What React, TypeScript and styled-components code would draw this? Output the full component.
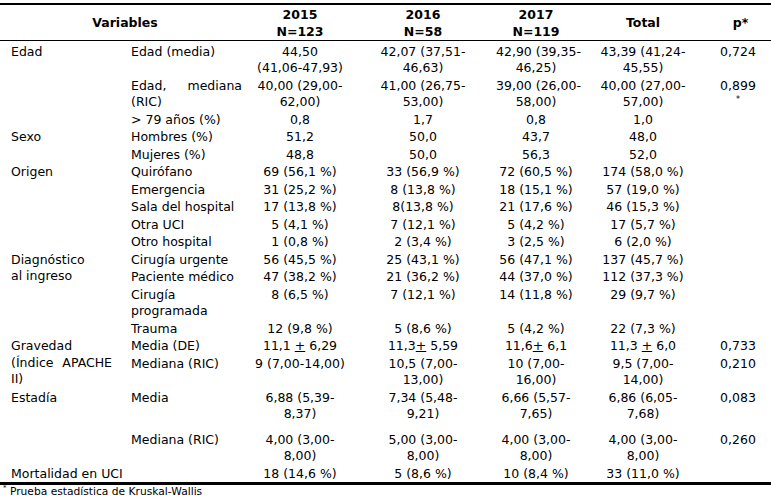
import React from "react";
import styled, { createGlobalStyle } from "styled-components";

const GlobalStyle = createGlobalStyle`
  body {
    margin: 0;
    background: #fff;
    color: #000;
    font-family: "DejaVu Sans", Verdana, sans-serif;
  }
`;

// one line of text per "\n", "+_" becomes an underlined plus (±)
const renderText = (s: string) =>
  s.split("\n").map((line, i) => (
    <React.Fragment key={i}>
      {i > 0 && <br />}
      {line.split("+_").map((part, j) => (
        <React.Fragment key={j}>
          {j > 0 && <Under>+</Under>}
          {part}
        </React.Fragment>
      ))}
    </React.Fragment>
  ));

const Vals = ({ vals }: { vals: string[] }) => (
  <>
    {vals.map((v, i) => (
      <DataCell key={i}>{renderText(v)}</DataCell>
    ))}
  </>
);

const App = () => {
  return (
    <Page>
      <GlobalStyle />
      <Table>
        <colgroup>
          <col style={{ width: 125 }} />
          <col style={{ width: 125 }} />
          <col style={{ width: 100 }} />
          <col style={{ width: 146 }} />
          <col style={{ width: 80 }} />
          <col style={{ width: 134 }} />
          <col style={{ width: 61 }} />
        </colgroup>
        <thead>
          <tr>
            <HeadCell colSpan={2}>Variables</HeadCell>
            <HeadCell>
              2015
              <br />
              N=123
            </HeadCell>
            <HeadCell>
              2016
              <br />
              N=58
            </HeadCell>
            <HeadCell>
              2017
              <br />
              N=119
            </HeadCell>
            <HeadCell>Total</HeadCell>
            <HeadCell>p*</HeadCell>
          </tr>
        </thead>
        <tbody>
          <tr>
            <GroupCell rowSpan={3}>Edad</GroupCell>
            <LabelCell>Edad (media)</LabelCell>
            <Vals
              vals={[
                "44,50\n(41,06-47,93)",
                "42,07 (37,51-\n46,63)",
                "42,90 (39,35-\n46,25)",
                "43,39 (41,24-\n45,55)",
              ]}
            />
            <PCell>0,724</PCell>
          </tr>
          <tr>
            <LabelCell>
              <Justified>Edad, mediana</Justified>
              (RIC)
            </LabelCell>
            <Vals
              vals={[
                "40,00 (29,00-\n62,00)",
                "41,00 (26,75-\n53,00)",
                "39,00 (26,00-\n58,00)",
                "40,00 (27,00-\n57,00)",
              ]}
            />
            <PCell>
              0,899
              <br />
              <Star>*</Star>
            </PCell>
          </tr>
          <tr>
            <LabelCell>&gt; 79 años (%)</LabelCell>
            <Vals vals={["0,8", "1,7", "0,8", "1,0"]} />
            <PCell />
          </tr>

          <tr>
            <GroupCell rowSpan={2}>Sexo</GroupCell>
            <LabelCell>Hombres (%)</LabelCell>
            <Vals vals={["51,2", "50,0", "43,7", "48,0"]} />
            <PCell />
          </tr>
          <tr>
            <LabelCell>Mujeres (%)</LabelCell>
            <Vals vals={["48,8", "50,0", "56,3", "52,0"]} />
            <PCell />
          </tr>

          <tr>
            <GroupCell rowSpan={5}>Origen</GroupCell>
            <LabelCell>Quirófano</LabelCell>
            <Vals
              vals={["69 (56,1 %)", "33 (56,9 %)", "72 (60,5 %)", "174 (58,0 %)"]}
            />
            <PCell />
          </tr>
          <tr>
            <LabelCell>Emergencia</LabelCell>
            <Vals
              vals={["31 (25,2 %)", "8 (13,8 %)", "18 (15,1 %)", "57 (19,0 %)"]}
            />
            <PCell />
          </tr>
          <tr>
            <LabelCell>Sala del hospital</LabelCell>
            <Vals
              vals={["17 (13,8 %)", "8(13,8 %)", "21 (17,6 %)", "46 (15,3 %)"]}
            />
            <PCell />
          </tr>
          <tr>
            <LabelCell>Otra UCI</LabelCell>
            <Vals vals={["5 (4,1 %)", "7 (12,1 %)", "5 (4,2 %)", "17 (5,7 %)"]} />
            <PCell />
          </tr>
          <tr>
            <LabelCell>Otro hospital</LabelCell>
            <Vals vals={["1 (0,8 %)", "2 (3,4 %)", "3 (2,5 %)", "6 (2,0 %)"]} />
            <PCell />
          </tr>

          <tr>
            <GroupCell rowSpan={4}>
              Diagnóstico
              <br />
              al ingreso
            </GroupCell>
            <LabelCell>Cirugía urgente</LabelCell>
            <Vals
              vals={["56 (45,5 %)", "25 (43,1 %)", "56 (47,1 %)", "137 (45,7 %)"]}
            />
            <PCell />
          </tr>
          <tr>
            <LabelCell>Paciente médico</LabelCell>
            <Vals
              vals={["47 (38,2 %)", "21 (36,2 %)", "44 (37,0 %)", "112 (37,3 %)"]}
            />
            <PCell />
          </tr>
          <tr>
            <LabelCell>
              Cirugía
              <br />
              programada
            </LabelCell>
            <Vals
              vals={["8 (6,5 %)", "7 (12,1 %)", "14 (11,8 %)", "29 (9,7 %)"]}
            />
            <PCell />
          </tr>
          <tr>
            <LabelCell>Trauma</LabelCell>
            <Vals vals={["12 (9,8 %)", "5 (8,6 %)", "5 (4,2 %)", "22 (7,3 %)"]} />
            <PCell />
          </tr>

          <tr>
            <GroupCell rowSpan={2}>
              Gravedad
              <Justified>(Índice APACHE</Justified>
              II)
            </GroupCell>
            <LabelCell>Media (DE)</LabelCell>
            <Vals
              vals={["11,1 +_ 6,29", "11,3+_ 5,59", "11,6+_ 6,1", "11,3 +_ 6,0"]}
            />
            <PCell>0,733</PCell>
          </tr>
          <tr>
            <LabelCell>Mediana (RIC)</LabelCell>
            <Vals
              vals={[
                "9 (7,00-14,00)",
                "10,5 (7,00-\n13,00)",
                "10 (7,00-\n16,00)",
                "9,5 (7,00-\n14,00)",
              ]}
            />
            <PCell>0,210</PCell>
          </tr>

          <GapRow>
            <GroupCell rowSpan={2}>Estadía</GroupCell>
            <LabelCell>Media</LabelCell>
            <Vals
              vals={[
                "6,88 (5,39-\n8,37)",
                "7,34 (5,48-\n9,21)",
                "6,66 (5,57-\n7,65)",
                "6,86 (6,05-\n7,68)",
              ]}
            />
            <PCell>0,083</PCell>
          </GapRow>
          <tr>
            <LabelCell>Mediana (RIC)</LabelCell>
            <Vals
              vals={[
                "4,00 (3,00-\n8,00)",
                "5,00 (3,00-\n8,00)",
                "4,00 (3,00-\n8,00)",
                "4,00 (3,00-\n8,00)",
              ]}
            />
            <PCell>0,260</PCell>
          </tr>

          <tr>
            <GroupCell colSpan={2}>Mortalidad en UCI</GroupCell>
            <Vals
              vals={["18 (14,6 %)", "5 (8,6 %)", "10 (8,4 %)", "33 (11,0 %)"]}
            />
            <PCell />
          </tr>
        </tbody>
      </Table>
      <Footnote>
        <sup>*</sup> Prueba estadística de Kruskal-Wallis
      </Footnote>
    </Page>
  );
};

const Page = styled.div`
  width: 771px;
  height: 500px;
  overflow: hidden;
  background: #fff;
`;

const Table = styled.table`
  width: 771px;
  margin-top: 3px;
  border-collapse: separate;
  border-spacing: 0;
  table-layout: fixed;
  border-top: 2px solid #000;
  border-bottom: 3px solid #000;
  font-size: 12.5px;
  line-height: 16.5px;

  tbody tr:first-child > td {
    padding-top: 2.5px;
  }
`;

const HeadCell = styled.th`
  padding: 2px 0 0;
  font-weight: bold;
  text-align: center;
  vertical-align: middle;
  border-bottom: 1px solid #000;
`;

const GroupCell = styled.td`
  padding: 1px 13px 0 11px;
  text-align: left;
  vertical-align: top;
`;

const LabelCell = styled.td`
  padding: 1px 8px 0 6px;
  text-align: left;
  vertical-align: top;
  white-space: nowrap;
`;

const DataCell = styled.td`
  padding: 1px 0 0;
  text-align: center;
  vertical-align: top;
  white-space: nowrap;
`;

const PCell = styled.td`
  padding: 1px 5px 0 0;
  text-align: center;
  vertical-align: top;
`;

const GapRow = styled.tr`
  & > td {
    padding-bottom: 8px;
  }
`;

const Justified = styled.span`
  display: block;
  text-align: justify;
  text-align-last: justify;
  white-space: normal;
`;

const Under = styled.span`
  text-decoration: underline;
`;

const Star = styled.span`
  display: inline-block;
  margin-top: 2px;
  font-size: 8px;
  line-height: 8px;
  vertical-align: top;
`;

const Footnote = styled.div`
  padding-left: 3px;
  font-size: 10.7px;
  line-height: 13px;

  sup {
    font-size: 7px;
    line-height: 0;
  }
`;

export default App;
